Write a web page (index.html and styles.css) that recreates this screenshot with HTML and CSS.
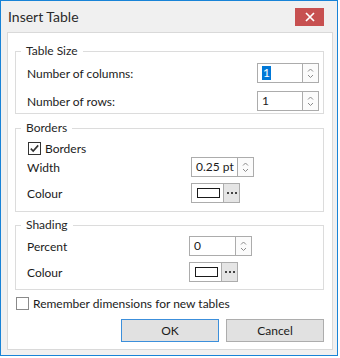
FILE: index.html
```html
<!DOCTYPE html>
<html>
<head>
<meta charset="utf-8">
<title>Insert Table</title>
<link rel="stylesheet" href="styles.css">
</head>
<body>
<div class="window">
  <div class="titlebar">
    <span class="title">Insert Table</span>
    <button class="close" aria-label="Close"><svg width="10" height="10" viewBox="0 0 10 10"><path d="M1 1L9 9M9 1L1 9" stroke="#fff" stroke-width="1.7"/></svg></button>
  </div>
  <div class="panel">
    <fieldset class="group g1">
      <legend>Table Size</legend>
      <div class="row r-first">
        <span class="label">Number of columns:</span>
        <div class="spin s62"><span class="val"><span class="sel">1</span></span><span class="arrows"><svg width="15" height="18" viewBox="0 0 15 18"><path d="M5 7.5L7.5 5L10 7.5M5 11L7.5 13.5L10 11" fill="none" stroke="#8a8a8a" stroke-width="1"/></svg></span></div>
      </div>
      <div class="row r-second">
        <span class="label">Number of rows:</span>
        <div class="spin s62"><span class="val">1</span><span class="arrows"><svg width="15" height="18" viewBox="0 0 15 18"><path d="M5 7.5L7.5 5L10 7.5M5 11L7.5 13.5L10 11" fill="none" stroke="#8a8a8a" stroke-width="1"/></svg></span></div>
      </div>
    </fieldset>

    <fieldset class="group g2">
      <legend>Borders</legend>
      <label class="check-row">
        <span class="checkbox"><svg width="11" height="11" viewBox="0 0 11 11"><path d="M1.8 5.6L4.2 8L9.2 2.4" fill="none" stroke="#333" stroke-width="1.6"/></svg></span>
        <span>Borders</span>
      </label>
      <div class="row r-width">
        <span class="label">Width</span>
        <div class="spin s63"><span class="val">0.25 pt</span><span class="arrows"><svg width="15" height="18" viewBox="0 0 15 18"><path d="M5 7.5L7.5 5L10 7.5M5 11L7.5 13.5L10 11" fill="none" stroke="#8a8a8a" stroke-width="1"/></svg></span></div>
      </div>
      <div class="row r-colour">
        <span class="label">Colour</span>
        <div class="colour-btn"><span class="swatch-area"><span class="swatch"></span></span><span class="more"><i></i><i></i><i></i></span></div>
      </div>
    </fieldset>

    <fieldset class="group g3">
      <legend>Shading</legend>
      <div class="row r-percent">
        <span class="label">Percent</span>
        <div class="spin s63"><span class="val">0</span><span class="arrows"><svg width="15" height="18" viewBox="0 0 15 18"><path d="M5 7.5L7.5 5L10 7.5M5 11L7.5 13.5L10 11" fill="none" stroke="#8a8a8a" stroke-width="1"/></svg></span></div>
      </div>
      <div class="row r-colour">
        <span class="label">Colour</span>
        <div class="colour-btn"><span class="swatch-area"><span class="swatch"></span></span><span class="more"><i></i><i></i><i></i></span></div>
      </div>
    </fieldset>

    <label class="remember">
      <span class="checkbox light"></span>
      <span>Remember dimensions for new tables</span>
    </label>

    <div class="buttons">
      <button class="btn default">OK</button>
      <button class="btn">Cancel</button>
    </div>
  </div>
</div>
</body>
</html>
```

FILE: styles.css
```css
* { box-sizing: border-box; }
html, body { margin: 0; padding: 0; background: #fff; }
body {
  font-family: "Lato", "Noto Sans", sans-serif;
  font-size: 12px;
  color: #1b1b1b;
}
.window {
  width: 338px;
  height: 356px;
  border: 1px solid #1883d7;
  background: #f0f0f0;
}
.titlebar {
  height: 31px;
  display: flex;
  align-items: center;
  justify-content: space-between;
  padding-left: 7px;
  padding-right: 13px;
}
.title {
  font-size: 14px;
  color: #2b2b2b;
}
.close {
  width: 29px;
  height: 18px;
  border: 0;
  padding: 0;
  background: #c75050;
  display: flex;
  align-items: center;
  justify-content: center;
}
.panel {
  margin-left: 6px;
  width: 326px;
  height: 318px;
  background: #fff;
  border: 1px solid #d9d9d9;
  padding: 0 7px;
  display: flex;
  flex-direction: column;
}
.group {
  width: 309px;
  margin: 0;
  border: 1px solid #dcdcdc;
  padding: 0 4px 0 11px;
  min-width: 0;
}
.group legend {
  margin-left: -6px;
  padding: 0 5px;
  line-height: 16px;
  height: 16px;
  color: #262626;
}
.g1 { margin-top: 10px; padding-top: 4px; padding-bottom: 2px; }
.g2 { margin-top: 6px; padding-top: 4px; padding-bottom: 8px; }
.g3 { margin-top: 5px; padding-top: 3px; padding-bottom: 7px; }

.row {
  display: flex;
  align-items: center;
  height: 20px;
}
.g1 .label { width: 230px; }
.g2 .label { width: 164px; }
.g3 .label { width: 162px; }
.r-second { margin-top: 8px; }
.r-colour { margin-top: 6px; }

.spin {
  display: flex;
  height: 20px;
  border: 1px solid #acacac;
  background: #fff;
}
.s62 { width: 62px; }
.s63 { width: 63px; }
.spin .val {
  flex: 1;
  padding-left: 4px;
  line-height: 18px;
  white-space: nowrap;
}
.sel {
  background: #0078d7;
  color: #fff;
  padding: 0 1px;
  display: inline-block;
  line-height: 14px;
}
.arrows {
  width: 16px;
  border-left: 1px solid #acacac;
  background: #fbfbfb;
  display: flex;
  align-items: center;
  justify-content: center;
}
.arrows svg { display: block; }

.check-row {
  display: flex;
  align-items: center;
  height: 17px;
  margin-left: 1px;
  margin-bottom: 0;
}
.checkbox {
  width: 13px;
  height: 13px;
  border: 1px solid #333;
  background: #fff;
  margin-right: 4px;
  display: flex;
  align-items: center;
  justify-content: center;
  flex: none;
}
.checkbox.light { border-color: #8a8a8a; }

.colour-btn {
  width: 49px;
  height: 20px;
  border: 1px solid #acacac;
  display: flex;
  background: #fff;
}
.swatch-area {
  width: 31px;
  display: flex;
  align-items: center;
  padding-left: 5px;
}
.swatch {
  width: 23px;
  height: 10px;
  border: 1px solid #1a1a1a;
  background: #fff;
}
.more {
  flex: 1;
  border-left: 1px solid #acacac;
  background: #e5e5e5;
  display: flex;
  align-items: center;
  justify-content: center;
  gap: 2px;
}
.more i {
  width: 2px;
  height: 2px;
  background: #444;
  display: block;
}

.remember {
  display: flex;
  align-items: center;
  height: 16px;
  margin-top: 5px;
  margin-left: 1px;
}
.buttons {
  display: flex;
  justify-content: flex-end;
  gap: 7px;
  margin-top: 8px;
  padding-right: 1px;
}
.btn {
  width: 98px;
  height: 23px;
  background: #e1e1e1;
  border: 1px solid #adadad;
  font: inherit;
  color: #1b1b1b;
  padding: 0;
}
.btn.default { border-color: #3c8fdb; }
```
